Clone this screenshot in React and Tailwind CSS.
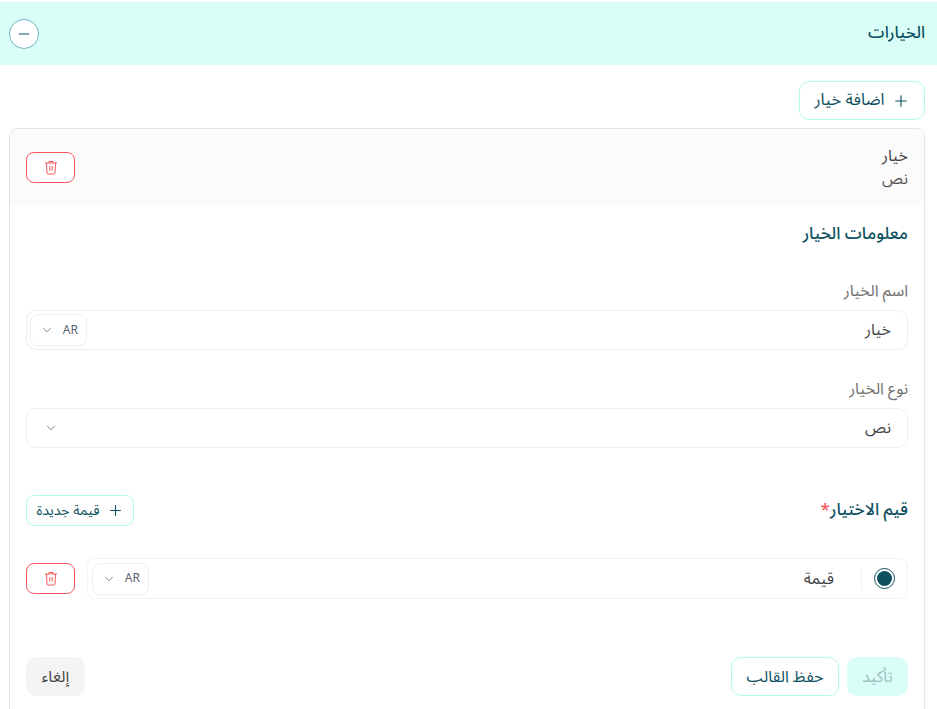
import { Plus, Minus, ChevronDown } from "lucide-react";

const font = { fontFamily: '"Noto Sans Arabic", "Noto Sans", "DejaVu Sans", sans-serif' };

function DeleteButton() {
  return (
    <button className="w-[49px] h-[31px] flex items-center justify-center rounded-[8px] border border-[#f9575c] bg-white text-[#f9575c]">
      <TrashIcon />
    </button>
  );
}

function TrashIcon() {
  return (
    <svg width="14" height="15" viewBox="0 0 14 15" fill="none" stroke="currentColor" strokeWidth="1">
      <path d="M1 3h12" />
      <path d="M5 3V1.5h4V3" />
      <path d="M2.5 3l.5 10a1.2 1.2 0 0 0 1.2 1h5.6a1.2 1.2 0 0 0 1.2-1l.5-10" />
      <path d="M5.8 6v4.5M8.2 6v4.5" />
    </svg>
  );
}

function LangSelect() {
  return (
    <div className="w-[57px] h-[32px] flex items-center justify-between pl-[9px] pr-[8px] rounded-[8px] border border-[#eeeeee] bg-white" dir="ltr">
      <ChevronDown size={14} strokeWidth={1.25} className="text-[#555f66]" />
      <span className="text-[12px] leading-[18px] pt-[1px] text-[#5d5f73]" style={font}>AR</span>
    </div>
  );
}

function App() {
  return (
    <div dir="rtl" className="w-[937px] h-[709px] overflow-hidden bg-white" style={font}>
      <div className="mt-[2px] h-[63px] bg-[#d9fef7] flex items-center justify-between pr-[12px] pl-[9px]">
        <span className="text-[16.5px] font-medium text-[#0d5060]">الخيارات</span>
        <div className="w-[30px] h-[30px] rounded-full border border-[#6cb3c4] bg-white flex items-center justify-center">
          <Minus size={16} strokeWidth={2.5} className="text-[#5b8f9b]" />
        </div>
      </div>

      <div className="pr-[12px] pl-[9px]">
        <div className="flex pt-[16px] pb-[8px]">
          <button className="w-[126px] h-[39px] flex items-center justify-center gap-[7px] rounded-[10px] border border-[#b4fbeb] text-[16.5px] text-[#0d5060]">
            <Plus size={18} strokeWidth={1.5} />
            اضافة خيار
          </button>
        </div>

        <div className="border border-[#e5e5e5] rounded-t-[8px] h-[600px]">
          <div className="h-[77px] bg-[#fbfbfb] rounded-t-[8px] flex items-center justify-between px-[16px]">
            <div className="flex flex-col text-[16px] leading-[23px]">
              <span className="text-[#444444]">خيار</span>
              <span className="text-[#555555]">نص</span>
            </div>
            <DeleteButton />
          </div>

          <div className="px-[16px]">
            <h3 className="mt-[17px] text-[17px] leading-[22px] font-medium text-[#0d5060]">معلومات الخيار</h3>

            <label className="block mt-[35px] text-[16px] leading-[22px] text-[#707070]">اسم الخيار</label>
            <div className="mt-[8px] h-[40px] rounded-[10px] border border-[#eeeeee] flex items-center justify-between pr-[16px] pl-[3px]">
              <span className="text-[16px] text-[#444444]">خيار</span>
              <LangSelect />
            </div>

            <label className="block mt-[28px] text-[16px] leading-[22px] text-[#707070]">نوع الخيار</label>
            <div className="mt-[8px] h-[40px] rounded-[10px] border border-[#eeeeee] flex items-center justify-between pr-[16px] pl-[17px]">
              <span className="text-[16px] text-[#444444]">نص</span>
              <ChevronDown size={14} strokeWidth={1.25} className="text-[#555f66]" />
            </div>

            <div className="mt-[47px] h-[31px] flex items-center justify-between">
              <span className="text-[17px] font-medium text-[#0d5060]">
                قيم الاختيار<span className="text-[#f9575c]">*</span>
              </span>
              <button className="w-[108px] h-[31px] flex items-center justify-center gap-[7px] rounded-[8px] border border-[#b4fbeb] text-[14px] text-[#0d5060]">
                <Plus size={17} strokeWidth={1.5} />
                قيمة جديدة
              </button>
            </div>

            <div className="mt-[32px] flex items-center gap-[12px]">
              <div className="flex-1 h-[41px] rounded-[8px] border border-[#f2f2f2] flex items-center justify-between pl-[4px]">
                <div className="flex items-center h-full">
                  <div className="w-[45px] flex justify-center">
                    <div className="w-[21px] h-[21px] rounded-full border border-[#0d5060] flex items-center justify-center">
                      <div className="w-[15px] h-[15px] rounded-full bg-[#0d5060]" />
                    </div>
                  </div>
                  <div className="w-px h-[22px] bg-[#f2f2f2]" />
                  <span className="mr-[27px] text-[16px] text-[#444444]">قيمة</span>
                </div>
                <LangSelect />
              </div>
              <DeleteButton />
            </div>

            <div className="mt-[58px] flex items-center justify-between">
              <div className="flex gap-[8px]">
                <button className="w-[61px] h-[39px] rounded-[10px] bg-[#d9fef7] text-[16px] text-[#9fbdc1]">تأكيد</button>
                <button className="w-[108px] h-[39px] rounded-[10px] border border-[#b4fbeb] text-[16px] text-[#0d5060]">حفظ القالب</button>
              </div>
              <button className="w-[59px] h-[39px] rounded-[10px] bg-[#f4f4f4] text-[16px] text-[#444444]">إلغاء</button>
            </div>
          </div>
        </div>
      </div>
    </div>
  );
}

export default App;
